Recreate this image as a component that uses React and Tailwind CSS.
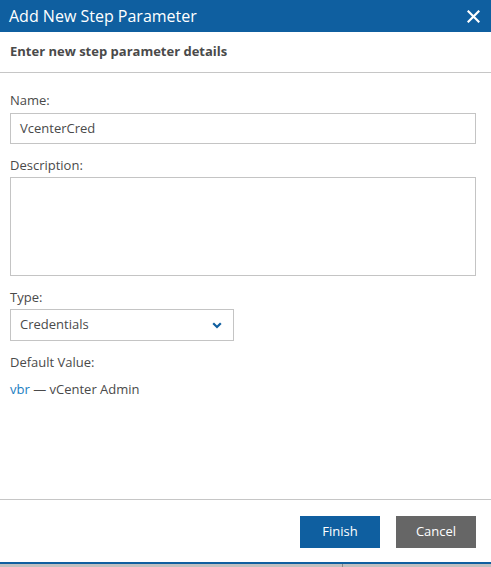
export default function App() {
  const font = { fontFamily: '"Open Sans", "Noto Sans", sans-serif' };
  return (
    <div className="w-[491px] h-[567px] bg-white flex flex-col text-[#4a4a4a] overflow-hidden" style={font}>
      <div className="h-[32px] bg-[#0f5fa0] flex items-center justify-between pl-[9px] pr-[11px] shrink-0">
        <span className="text-white text-[16px] leading-none">Add New Step Parameter</span>
        <svg width="13" height="13" viewBox="0 0 13 13" className="mt-[1px]">
          <path d="M1.5 1.5 L11.5 11.5 M11.5 1.5 L1.5 11.5" stroke="white" strokeWidth="2.2" strokeLinecap="square" />
        </svg>
      </div>
      <div className="h-[41px] border-b border-[#c6c6c6] flex items-center pl-[10px] shrink-0">
        <span className="text-[13px] font-bold text-[#4a4a4a]">Enter new step parameter details</span>
      </div>
      <div className="flex-1 px-[10px] pt-[18px] flex flex-col">
        <div className="text-[13px] leading-[18px] h-[18px]">Name:</div>
        <div className="mt-[4px] w-[466px] h-[31px] border border-[#c4c4c4] flex items-center pl-[9px] text-[13px]">VcenterCred</div>
        <div className="mt-[12px] text-[13px] leading-[18px] h-[18px]">Description:</div>
        <div className="mt-[3px] w-[466px] h-[99px] border border-[#c4c4c4]"></div>
        <div className="mt-[12px] text-[13px] leading-[18px] h-[18px]">Type:</div>
        <div className="mt-[3px] w-[224px] h-[32px] border border-[#c4c4c4] flex items-center justify-between pl-[9px] pr-[11px] text-[13px]">
          <span>Credentials</span>
          <svg width="10" height="7" viewBox="0 0 10 7">
            <path d="M1.2 1.2 L5 5 L8.8 1.2" stroke="#0f5fa0" strokeWidth="2.2" fill="none" />
          </svg>
        </div>
        <div className="mt-[12px] text-[13px] leading-[18px] h-[18px]">Default Value:</div>
        <div className="mt-[9px] text-[13px] leading-[18px] h-[18px]">
          <span className="text-[#1b7dbf]">vbr</span> — vCenter Admin
        </div>
      </div>
      <div className="h-[63px] border-t border-[#c6c6c6] flex items-start justify-end pr-[15px] pt-[16px] gap-[16px] shrink-0">
        <button className="w-[80px] h-[32px] bg-[#0f5fa0] text-white text-[13px] font-medium">Finish</button>
        <button className="w-[80px] h-[32px] bg-[#666666] text-white text-[13px] font-medium">Cancel</button>
      </div>
      <div className="h-[2px] bg-[#0f5fa0] shrink-0"></div>
      <div className="h-[3px] bg-[#c0c0c0] flex shrink-0">
        <div className="w-[343px] border-r border-[#8a8a8a]"></div>
      </div>
    </div>
  );
}
